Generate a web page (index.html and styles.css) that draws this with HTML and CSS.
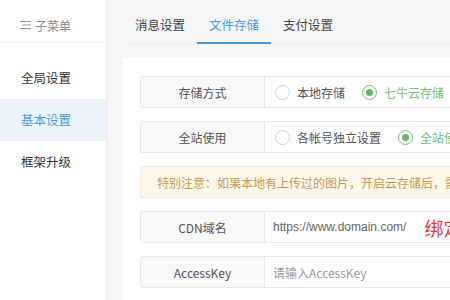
FILE: index.html
```html
<!DOCTYPE html>
<html lang="zh-CN">
<head>
    <meta charset="UTF-8">
    <meta name="viewport" content="width=device-width, initial-scale=1.0">
    <title>基本设置</title>
    <link rel="stylesheet" href="styles.css">
</head>
<body>
    <div class="app">
        <div class="sidebar">
            <div class="sidebar-head">
                <svg class="menu-icon" width="11" height="10" viewBox="0 0 11 10">
                    <path d="M0 1.5h11M2 5h9M0 8.5h11" stroke="#999" stroke-width="1.2" fill="none"/>
                </svg>
                <span>子菜单</span>
            </div>
            <ul class="menu">
                <li>全局设置</li>
                <li class="active">基本设置</li>
                <li>框架升级</li>
            </ul>
        </div>
        <div class="main">
            <div class="tabs">
                <div class="tab">消息设置</div>
                <div class="tab active">文件存储</div>
                <div class="tab">支付设置</div>
            </div>
            <div class="panel">
                <div class="form-row">
                    <div class="form-label">存储方式</div>
                    <div class="form-value">
                        <span class="radio"><i></i>本地存储</span>
                        <span class="radio checked"><i></i>七牛云存储</span>
                    </div>
                </div>
                <div class="form-row">
                    <div class="form-label">全站使用</div>
                    <div class="form-value">
                        <span class="radio"><i></i>各帐号独立设置</span>
                        <span class="radio checked"><i></i>全站使用统一设置</span>
                    </div>
                </div>
                <div class="notice">特别注意：如果本地有上传过的图片，开启云存储后，需要将本地图片同步到云存储</div>
                <div class="form-row">
                    <div class="form-label">CDN域名</div>
                    <div class="form-value">
                        <span class="input-text">https://www.domain.com/</span>
                        <span class="tip-red">绑定的域名</span>
                    </div>
                </div>
                <div class="form-row">
                    <div class="form-label">AccessKey</div>
                    <div class="form-value">
                        <span class="placeholder">请输入AccessKey</span>
                    </div>
                </div>
                <div class="form-row">
                    <div class="form-label">SecretKey</div>
                    <div class="form-value">
                        <span class="placeholder">请输入SecretKey</span>
                    </div>
                </div>
            </div>
        </div>
    </div>
</body>
</html>
```

FILE: styles.css
```css
html, body {
    margin: 0;
    padding: 0;
    overflow: hidden;
}
body {
    font-family: "Noto Sans CJK SC", "Liberation Sans", sans-serif;
    font-size: 12px;
    color: #333;
    background-color: #f5f6f8;
}
.app {
    display: flex;
    width: 900px;
    height: 300px;
}
.sidebar {
    width: 106px;
    flex-shrink: 0;
    background-color: #fff;
    border-right: 1px solid #e9eaed;
}
.sidebar-head {
    height: 43px;
    box-sizing: border-box;
    padding: 8px 0 0 20px;
    display: flex;
    align-items: center;
    gap: 4px;
    color: #888;
    border-bottom: 1px solid #eeeff2;
}
.menu {
    list-style-type: none;
    margin: 0;
    padding: 14px 0 0;
}
.menu li {
    height: 42px;
    line-height: 42px;
    padding-left: 21px;
    font-size: 12.5px;
    color: #333;
}
.menu li.active {
    background-color: #eaf3fc;
    color: #4a9ce2;
}
.main {
    flex: 1;
    padding-left: 16px;
}
.tabs {
    display: flex;
    height: 43px;
    border-bottom: 1px solid #eceef1;
}
.tab {
    padding: 6px 12px 0;
    display: flex;
    align-items: center;
    font-size: 12.5px;
    color: #444;
    border-bottom: 2px solid transparent;
    margin-bottom: -1px;
}
.tab.active {
    color: #4a9ce2;
    border-bottom-color: #4a95d8;
}
.panel {
    margin-top: 14px;
    background-color: #fff;
    padding: 18px 17px;
    height: 400px;
}
.form-row {
    display: flex;
    height: 32px;
    box-sizing: border-box;
    border: 1px solid #e8e8e8;
    border-radius: 2px;
    margin-bottom: 13px;
}
.form-label {
    width: 123px;
    flex-shrink: 0;
    background-color: #f8f8f8;
    border-right: 1px solid #e8e8e8;
    display: flex;
    align-items: center;
    justify-content: center;
    color: #555;
}
.form-value {
    display: flex;
    align-items: center;
    padding-left: 10px;
    white-space: nowrap;
}
.radio {
    display: flex;
    align-items: center;
    margin-right: 17px;
    color: #555;
}
.radio i {
    width: 13px;
    height: 13px;
    border: 1px solid #cfcfcf;
    border-radius: 50%;
    margin-right: 7px;
    box-sizing: content-box;
    position: relative;
}
.radio.checked {
    color: #74c272;
}
.radio.checked i {
    border-color: #6cbf6a;
}
.radio.checked i::after {
    content: "";
    position: absolute;
    left: 3px;
    top: 3px;
    width: 7px;
    height: 7px;
    border-radius: 50%;
    background-color: #5fb65c;
}
.notice {
    height: 32px;
    box-sizing: border-box;
    background-color: #fdf6ea;
    border: 1px solid #f6ead6;
    border-radius: 2px;
    margin-bottom: 13px;
    padding-left: 16px;
    display: flex;
    align-items: center;
    white-space: nowrap;
    color: #c89a52;
}
.input-text {
    font-family: "Liberation Sans", "Noto Sans CJK SC", sans-serif;
    color: #666;
    font-size: 12px;
    margin-left: -2px;
}
.placeholder {
    color: #999;
    margin-left: -2px;
}
.tip-red {
    color: #e03a3a;
    font-size: 19px;
    margin-left: 18px;
}
```
